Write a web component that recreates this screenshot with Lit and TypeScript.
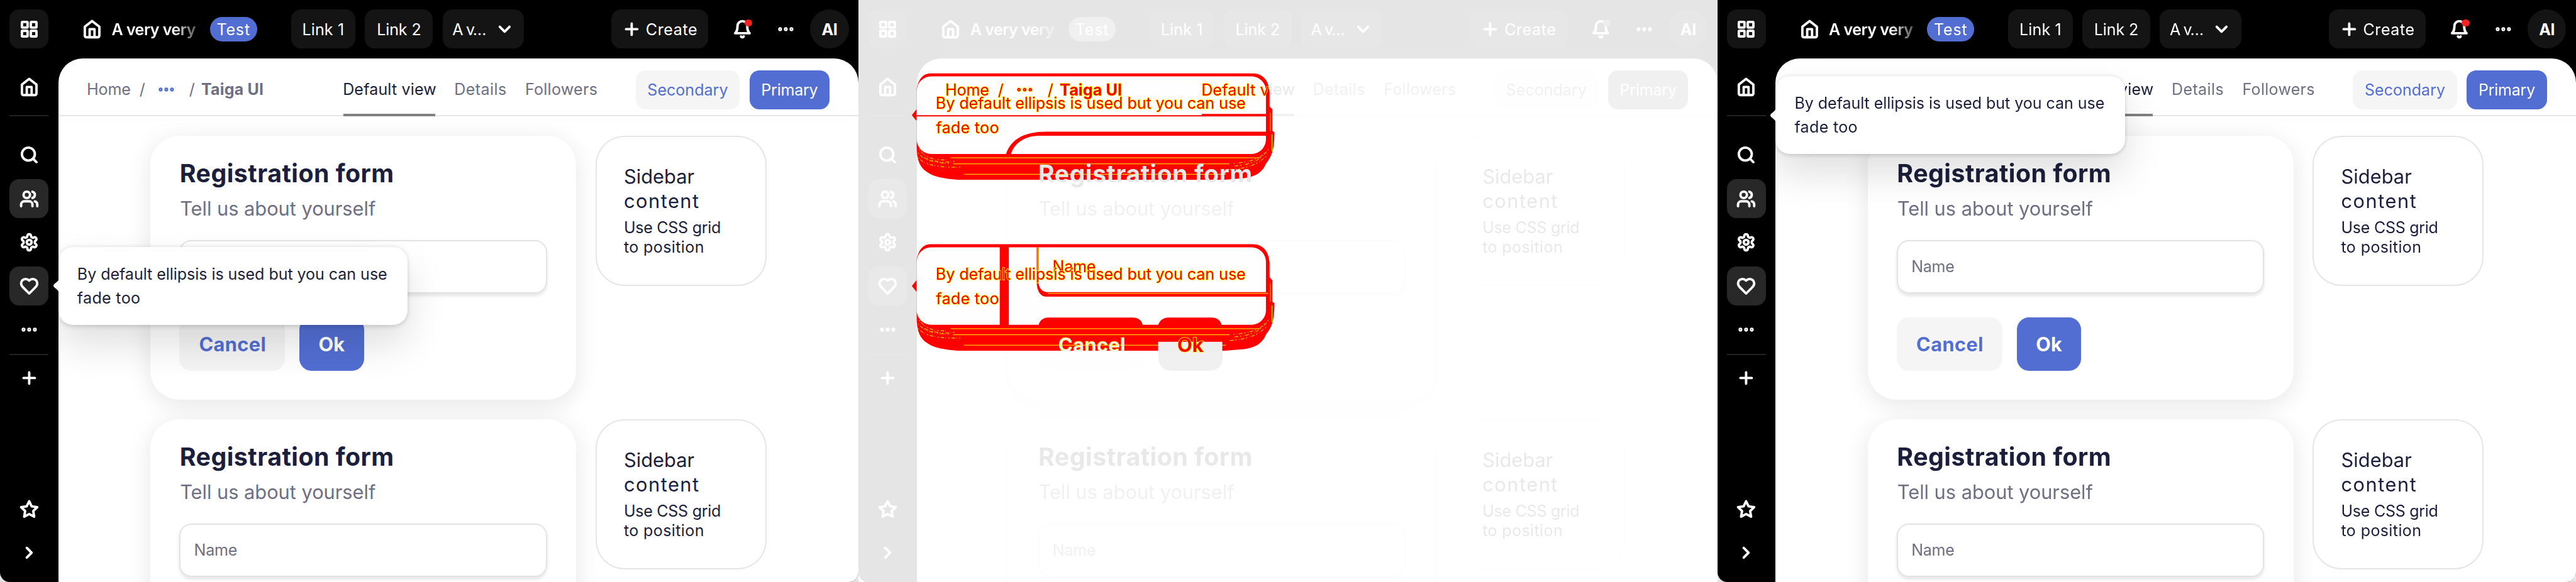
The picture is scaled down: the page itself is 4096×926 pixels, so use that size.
import { LitElement, html, css, svg, nothing } from "lit";
import { customElement, property } from "lit/decorators.js";
import { classMap } from "lit/directives/class-map.js";

const ICONS = {
  grid: svg`<rect x="3" y="3" width="7" height="7" rx="1"/><rect x="14" y="3" width="7" height="7" rx="1"/><rect x="14" y="14" width="7" height="7" rx="1"/><rect x="3" y="14" width="7" height="7" rx="1"/>`,
  home: svg`<path d="m3 9 9-7 9 7v11a2 2 0 0 1-2 2H5a2 2 0 0 1-2-2z"/><path d="M9 22V12h6v10"/>`,
  search: svg`<circle cx="11" cy="11" r="8"/><path d="m21 21-4.3-4.3"/>`,
  users: svg`<path d="M16 21v-2a4 4 0 0 0-4-4H6a4 4 0 0 0-4 4v2"/><circle cx="9" cy="7" r="4"/><path d="M22 21v-2a4 4 0 0 0-3-3.87"/><path d="M16 3.13a4 4 0 0 1 0 7.75"/>`,
  settings: svg`<path d="M12.22 2h-.44a2 2 0 0 0-2 2v.18a2 2 0 0 1-1 1.73l-.43.25a2 2 0 0 1-2 0l-.15-.08a2 2 0 0 0-2.73.73l-.22.38a2 2 0 0 0 .73 2.73l.15.1a2 2 0 0 1 1 1.72v.51a2 2 0 0 1-1 1.74l-.15.09a2 2 0 0 0-.73 2.73l.22.38a2 2 0 0 0 2.73.73l.15-.08a2 2 0 0 1 2 0l.43.25a2 2 0 0 1 1 1.73V20a2 2 0 0 0 2 2h.44a2 2 0 0 0 2-2v-.18a2 2 0 0 1 1-1.73l.43-.25a2 2 0 0 1 2 0l.15.08a2 2 0 0 0 2.73-.73l.22-.39a2 2 0 0 0-.73-2.73l-.15-.08a2 2 0 0 1-1-1.74v-.5a2 2 0 0 1 1-1.74l.15-.09a2 2 0 0 0 .73-2.73l-.22-.38a2 2 0 0 0-2.73-.73l-.15.08a2 2 0 0 1-2 0l-.43-.25a2 2 0 0 1-1-1.73V4a2 2 0 0 0-2-2z"/><circle cx="12" cy="12" r="3"/>`,
  heart: svg`<path d="M19 14c1.49-1.46 3-3.21 3-5.5A5.5 5.5 0 0 0 16.5 3c-1.76 0-3 .5-4.5 2-1.5-1.5-2.74-2-4.5-2A5.5 5.5 0 0 0 2 8.5c0 2.3 1.5 4.05 3 5.5l7 7Z"/>`,
  more: svg`<g stroke-width="1.9"><circle cx="5" cy="12" r="1.45"/><circle cx="12" cy="12" r="1.45"/><circle cx="19" cy="12" r="1.45"/></g>`,
  plus: svg`<path d="M5 12h14M12 5v14"/>`,
  star: svg`<path d="m12 2 3.09 6.26L22 9.27l-5 4.87 1.18 6.88L12 17.77l-6.18 3.25L7 14.14 2 9.27l6.91-1.01z"/>`,
  right: svg`<path d="m9 18 6-6-6-6"/>`,
  down: svg`<path d="m6 9 6 6 6-6"/>`,
  bell: svg`<path d="M6 8a6 6 0 0 1 12 0c0 7 3 9 3 9H3s3-2 3-9"/><path d="M10.3 21a1.94 1.94 0 0 0 3.4 0"/>`,
};

const icon = (name: keyof typeof ICONS) =>
  html`<svg class="icon" viewBox="0 0 24 24">${ICONS[name]}</svg>`;

const type = css`
  .t-name { letter-spacing: -0.264px; }
  .t-test { letter-spacing: 0.428px; }
  .t-link1 { letter-spacing: 0.066px; }
  .t-link2 { letter-spacing: -0.054px; }
  .t-av { letter-spacing: -0.7px; }
  .t-create { letter-spacing: 0.299px; }
  .t-ai { letter-spacing: -0.2px; }
  .t-home { letter-spacing: -0.081px; }
  .t-taiga { letter-spacing: 0.079px; }
  .t-default { letter-spacing: 0.082px; }
  .t-details { letter-spacing: 0.204px; }
  .t-followers { letter-spacing: 0.139px; }
  .t-primary { letter-spacing: -0.122px; }
  .t-title { letter-spacing: 0.235px; }
  .t-sub { letter-spacing: -0.026px; }
  .t-field { letter-spacing: -0.127px; }
  .t-cancel { letter-spacing: 0.174px; }
  .t-content { letter-spacing: 0.759px; }
  .t-css { letter-spacing: -0.148px; }
  .t-pos { letter-spacing: 0.196px; }
  .t-tip1 { letter-spacing: -0.025px; }
  .t-tip2 { letter-spacing: 0.168px; }
`;

@customElement("hint-bubble")
export class HintBubble extends LitElement {
  static styles = [type, css`
    :host { display: block; box-sizing: border-box; width: 288px; height: 64px; padding: 12px 0 0 15.7px;
      border-radius: 12px; background: #fff; color: #1b1f3b; font-size: 13px; line-height: 20px; white-space: nowrap;
      box-shadow: 0 16px 32px rgba(0,0,0,.13), 0 1px 4px rgba(0,0,0,.17); }
    .arrow { position: absolute; left: -4px; top: 26.5px; width: 4.4px; height: 11px; fill: #fff; }
    .line { display: block; }
  `];
  render() {
    return html`<svg class="arrow" viewBox="0 0 4.4 11"><path d="M4.4 0C4 2.6 0 3.6 0 5.5S4 8.4 4.4 11z"/></svg>
      <span class="line t-tip1">By default ellipsis is used but you can use</span>
      <span class="line t-tip2">fade too</span>`;
  }
}

@customElement("layout-view")
export class LayoutView extends LitElement {
  @property() hint = "";

  static styles = [type, css`
    :host { display: grid; grid-template: 48px 1fr / 48px 1fr; position: relative; width: 708px; height: 480.2px;
      overflow: hidden; border-radius: 0 0 8px 8px; background: #000; font-size: 13px; color: #fff; white-space: nowrap; }
    .icon { display: block; flex: none; width: 16px; height: 16px; fill: none; stroke: currentColor; stroke-width: 3;
      stroke-linecap: round; stroke-linejoin: round; overflow: visible; }
    .header { grid-column: 1 / 3; display: flex; align-items: center; padding: 0 8px; }
    .btn { box-sizing: border-box; display: flex; align-items: center; justify-content: center; height: 32px;
      flex: none; border-radius: 8px; line-height: 20px; }
    .btn span { padding-top: 1px; }
    .dim { background: #141414; }
    .sq { width: 32px; }
    .lit { background: #282828; }
    .product { margin: 0 8px 0 28px; }
    .name { width: 70px; margin-right: 11.1px; padding-top: 1px; overflow: hidden; font-weight: 600; line-height: 20px;
      mask-image: linear-gradient(to right, #000 50px, transparent 80px); }
    .badge { width: 38.8px; height: 20px; margin-right: 28.1px; border-radius: 10px; background: #526ed3;
      text-align: center; line-height: 21px; }
    .links { display: flex; gap: 8px; }
    .w53 { width: 53px; } .w56 { width: 56px; } .w67 { width: 67px; gap: 7.5px; } .w80 { width: 80px; gap: 3.6px; }
    .create { margin-left: auto; margin-right: 12px; }
    .bell { position: relative; margin-right: 4px; }
    .dot { position: absolute; right: 7.8px; top: 8px; width: 6.4px; height: 6px; border-radius: 50%; background: #f52222; }
    .avatar { margin-left: 4px; border-radius: 50%; font-weight: 700; }

    .aside { display: flex; flex-direction: column; align-items: center; gap: 4px; padding: 8px 0; }
    .rule { width: 32px; height: 1px; background: #222; }
    .rule.top { margin: 3px 0 12px; }
    .rule.low { margin-bottom: -1px; }
    .push { margin-top: auto; }

    .main { display: flex; flex-direction: column; overflow: hidden; border-radius: 20px 20px 0 0; background: #fff; color: #1b1f3b; }
    .nav { position: relative; z-index: 1; flex: none; display: flex; box-sizing: border-box; height: 48px; padding: 0 24px 0 23.6px; }
    .border { position: absolute; left: 0; right: 0; bottom: 0; height: 1px; background: #e5e5e5; }
    .crumbs { display: grid; grid-template-columns: 43.4px 14.2px 16px 10.8px 10px auto; align-items: center; width: 211.5px;
      padding-top: 4px; color: #6e6f83; line-height: 20px; }
    .crumbs b { font-weight: 700; }
    .crumbs .icon { color: #526ed3; }
    .after { grid-column: 5; }
    .tabs { display: flex; gap: 16px; color: #6e6f83; line-height: 44px; }
    .tab { position: relative; box-sizing: border-box; height: 48px; padding-top: 4px; text-indent: -0.4px; }
    .tab.on { width: 75.9px; color: #1b1f3b; }
    .tab.on::after { content: ""; position: absolute; z-index: 1; left: 0; right: 0; bottom: 0; height: 2px; background: #808080; }
    .det { width: 42.4px; }
    .actions { display: flex; gap: 8px; margin: 10px 0 0 auto; }
    .btn.sec { width: 86px; background: #f5f5f5; color: #526ed3; }
    .btn.pri { background: #526ed3; color: #fff; }
    .w66 { width: 66px; }

    .page { display: grid; grid-template-columns: 351px 141px; gap: 16px; padding: 16px 0 0 76px; align-items: start; }
    .card { box-sizing: border-box; height: 218px; padding: 19.3px 24px 24px; border-radius: 24px; background: #fff;
      box-shadow: 0 4px 20px rgba(0,0,0,.1); }
    .title { height: 28.7px; padding-left: .2px; font-size: 20.4px; line-height: 24px; font-weight: 700; }
    .sub { height: 38px; padding-left: .4px; font-size: 16px; line-height: 24px; color: #6e6f83; }
    .field { box-sizing: border-box; width: 303px; height: 44px; padding-left: 12px; border-radius: 10px; line-height: 44px; color: #6e6f83;
      box-shadow: inset 0 0 0 1px #e3e3e3, 0 2px 3px rgba(0,0,0,.1); }
    .buttons { display: flex; gap: 12px; margin-top: 20px; }
    .big { height: 44px; border-radius: 10px; font-size: 16px; font-weight: 700; }
    .btn.cancel { width: 87px; padding-left: .6px; background: #f5f5f5; color: #526ed3; }
    .ok { width: 53px; }
    .side { box-sizing: border-box; height: 124px; padding: 24px 0 0 23.4px; border-radius: 24px; background: #fff;
      box-shadow: inset 0 0 0 1px #e5e5e5; }
    .head { margin-bottom: 4px; font-size: 16px; line-height: 20px; }
    .text { line-height: 16px; }
    .row { display: block; }
    hint-bubble { position: absolute; left: 48px; z-index: 2; }
    .at-home { top: 63px; }
    .at-heart { top: 204px; }
  `];

  private pair() {
    return html`
      <section class="card">
        <div class="title t-title">Registration form</div>
        <div class="sub t-sub">Tell us about yourself</div>
        <div class="field t-field">Name</div>
        <div class="buttons">
          <div class="btn big cancel t-cancel"><span>Cancel</span></div>
          <div class="btn big pri ok"><span>Ok</span></div>
        </div>
      </section>
      <section class="side">
        <div class="head"><span class="row">Sidebar</span><span class="row t-content">content</span></div>
        <div class="text"><span class="row t-css">Use CSS grid</span><span class="row t-pos">to position</span></div>
      </section>`;
  }

  render() {
    return html`
      <header class="header">
        <div class="btn sq dim">${icon("grid")}</div>
        <div class="product">${icon("home")}</div>
        <div class="name t-name">A very very</div>
        <div class="badge t-test">Test</div>
        <div class="links">
          <div class="btn dim w53 t-link1"><span>Link 1</span></div>
          <div class="btn dim w56 t-link2"><span>Link 2</span></div>
          <div class="btn dim w67 t-av"><span>A v…</span>${icon("down")}</div>
        </div>
        <div class="btn dim w80 create t-create">${icon("plus")}<span>Create</span></div>
        <div class="btn sq bell">${icon("bell")}<i class="dot"></i></div>
        <div class="btn sq">${icon("more")}</div>
        <div class="btn sq dim avatar t-ai"><span>AI</span></div>
      </header>
      <aside class="aside">
        <div class="btn sq">${icon("home")}</div>
        <div class="rule top"></div>
        <div class="btn sq">${icon("search")}</div>
        <div class="btn sq lit">${icon("users")}</div>
        <div class="btn sq">${icon("settings")}</div>
        <div class="btn sq lit">${icon("heart")}</div>
        <div class="btn sq">${icon("more")}</div>
        <div class="rule low"></div>
        <div class="btn sq">${icon("plus")}</div>
        <div class="btn sq push">${icon("star")}</div>
        <div class="btn sq">${icon("right")}</div>
      </aside>
      <main class="main">
        <nav class="nav">
          <div class="border"></div>
          <div class="crumbs"><span class="t-home">Home</span><span>/</span>${icon("more")}<span class="after">/</span><b class="t-taiga">Taiga UI</b></div>
          <div class="tabs">
            <div class="tab on t-default">Default view</div>
            <div class="tab det t-details">Details</div>
            <div class="tab t-followers">Followers</div>
          </div>
          <div class="actions">
            <div class="btn sec"><span>Secondary</span></div>
            <div class="btn pri w66 t-primary"><span>Primary</span></div>
          </div>
        </nav>
        <div class="page">${this.pair()}${this.pair()}</div>
      </main>
      ${this.hint
        ? html`<hint-bubble class=${classMap({ "at-home": this.hint === "home", "at-heart": this.hint === "heart" })}></hint-bubble>`
        : nothing}`;
  }
}

@customElement("diff-overlay")
export class DiffOverlay extends LitElement {
  static styles = [type, css`
    :host { display: block; }
    .canvas { display: block; width: 708px; height: 480px; font-size: 13px; }
    .red { fill: #f00; }
    .white { fill: #fefefe; }
    .stroke { fill: none; stroke: #f00; }
    .yellow { fill: none; stroke: #ff0; stroke-width: .5; }
    .noise { fill: none; stroke: #ff0; stroke-width: .5; stroke-dasharray: 1 1.5 3 1 .5 2; }
    .edge { fill: #f00; stroke: #ff0; stroke-width: .85; paint-order: stroke; }
    .bold { font-weight: 700; stroke-width: .8; }
    .h { font-size: 20.4px; font-weight: 700; fill: #e7e7e7; }
    .b { font-size: 16px; font-weight: 700; }
    .pale { fill: #efefef; stroke: #ff0; stroke-width: .25; }
    .gray { fill: #eee; }
  `];

  private blob(top: number) {
    return svg`<g transform="translate(0 ${top})">
      <path class="red" d="M48 10C50 1 54-2.5 60-2.5H325C334-2.5 338.5 4 339 13V25L341.2 27V45L343 46C343 60 341 66 336 72C333 80 326 83 318 84L302 85.3H82C66 84 60 82 54 77C49 72 48 66 48 56z"/>
      <path class="red" d="M48 27 44 32l4 5z"/>
      <path class="yellow" d="M76 67.2H331M78 72.2H306M87 80.8H303M339.6 30v15M341 48v14"/>
      <path class="noise" d="M49 63C54 69 60 71 76 72M49 67C56 74 66 75 84 75M52 66C60 70 70 72 80 70M335 63C330 69 320 71 308 72M336 66C328 74 318 76 306 77M338 60C332 70 322 73 310 74M50 60C56 68 62 69 74 69"/>
      <rect class="white" x="48" y="0" width="288" height="64" rx="12"/>
    </g>`;
  }

  private hint(top: number) {
    return svg`<text class="edge t-tip1" x="63.7" y=${top + 26.9}>By default ellipsis is used but you can use</text>
      <text class="edge t-tip2" x="63.9" y=${top + 46.9}>fade too</text>`;
  }

  render() {
    return html`<svg class="canvas" viewBox="0 0 708 480">
      ${this.blob(63)}
      <path class="red" d="M48 95h235.1v-1H338v2H48z"/>
      <path class="red" d="M121.7 127C126 114 138 108.7 155 108.7H339V112H148C136 112.5 128 119 125.8 127z"/>
      <text class="edge t-home" x="71.6" y="78.8">Home</text>
      <text class="edge" x="115" y="78.8">/</text>
      <g class="stroke" stroke-width="1.2"><circle cx="132.3" cy="74" r="1"/><circle cx="137" cy="74" r="1"/><circle cx="141.7" cy="74" r="1"/></g>
      <g class="yellow" stroke-width=".4"><circle cx="132.3" cy="74" r="1.7"/><circle cx="137" cy="74" r="1.7"/><circle cx="141.7" cy="74" r="1.7"/></g>
      <text class="edge" x="156" y="78.8">/</text>
      <text class="edge bold t-taiga" x="166" y="78.8">Taiga UI</text>
      <clipPath id="tip"><rect x="280" y="60" width="58.5" height="30"/></clipPath>
      <g clip-path="url(#tip)"><text class="edge t-default" x="282.7" y="78.8">Default view</text></g>
      ${this.hint(63)}
      <clipPath id="head"><rect x="140" y="127" width="200" height="21.3"/></clipPath>
      <g clip-path="url(#head)"><text class="h t-title" x="148.2" y="150.9">Registration form</text></g>

      ${this.blob(204)}
      <rect class="red" x="116.5" y="203" width="7.5" height="66"/>
      <path class="red" d="M147 204V234C147.5 241 150.5 244.8 155 244.8H339V241H156C151.5 241 148.7 238 148.6 233V204z"/>
      <path class="yellow" d="M147.9 204v30M156 242.1H338"/>
      <path class="red" d="M148.5 269C149 264.5 152 262 157 262H226C231 262 234 264.5 234.5 269zM247 269C248 264.5 251 262 256 262H291C296 262 299 264.5 299.5 269z"/>
      <text class="edge t-field" x="160" y="224.8">Name</text>
      ${this.hint(204)}
      <rect class="gray" x="247" y="282" width="53" height="8"/>
      <clipPath id="foot"><rect x="140" y="270" width="100" height="19.3"/></clipPath>
      <g clip-path="url(#foot)"><text class="b pale t-cancel" x="164.8" y="290.2">Cancel</text></g>
      <text class="edge b bold" x="262.9" y="290.2">Ok</text>
    </svg>`;
  }
}

@customElement("app-root")
export class AppRoot extends LitElement {
  static styles = css`
    :host { display: block; overflow: hidden; width: 4096px; height: 926px; background: #fff; font-family: "Inter", sans-serif; }
    .strip { display: flex; zoom: 1.92839; width: 2124px; height: 480.2px; }
    .shot { flex: none; width: 708px; height: 480.2px; background: linear-gradient(to bottom, #fff 472px, #dedede); }
    .diff { position: relative; background: #fff; }
    .faded { filter: grayscale(1); opacity: .103; }
    diff-overlay { position: absolute; left: 0; top: 0; }
  `;
  render() {
    return html`<div class="strip">
      <div class="shot"><layout-view hint="heart"></layout-view></div>
      <div class="shot diff"><div class="faded"><layout-view></layout-view></div><diff-overlay></diff-overlay></div>
      <div class="shot"><layout-view hint="home"></layout-view></div>
    </div>`;
  }
}
